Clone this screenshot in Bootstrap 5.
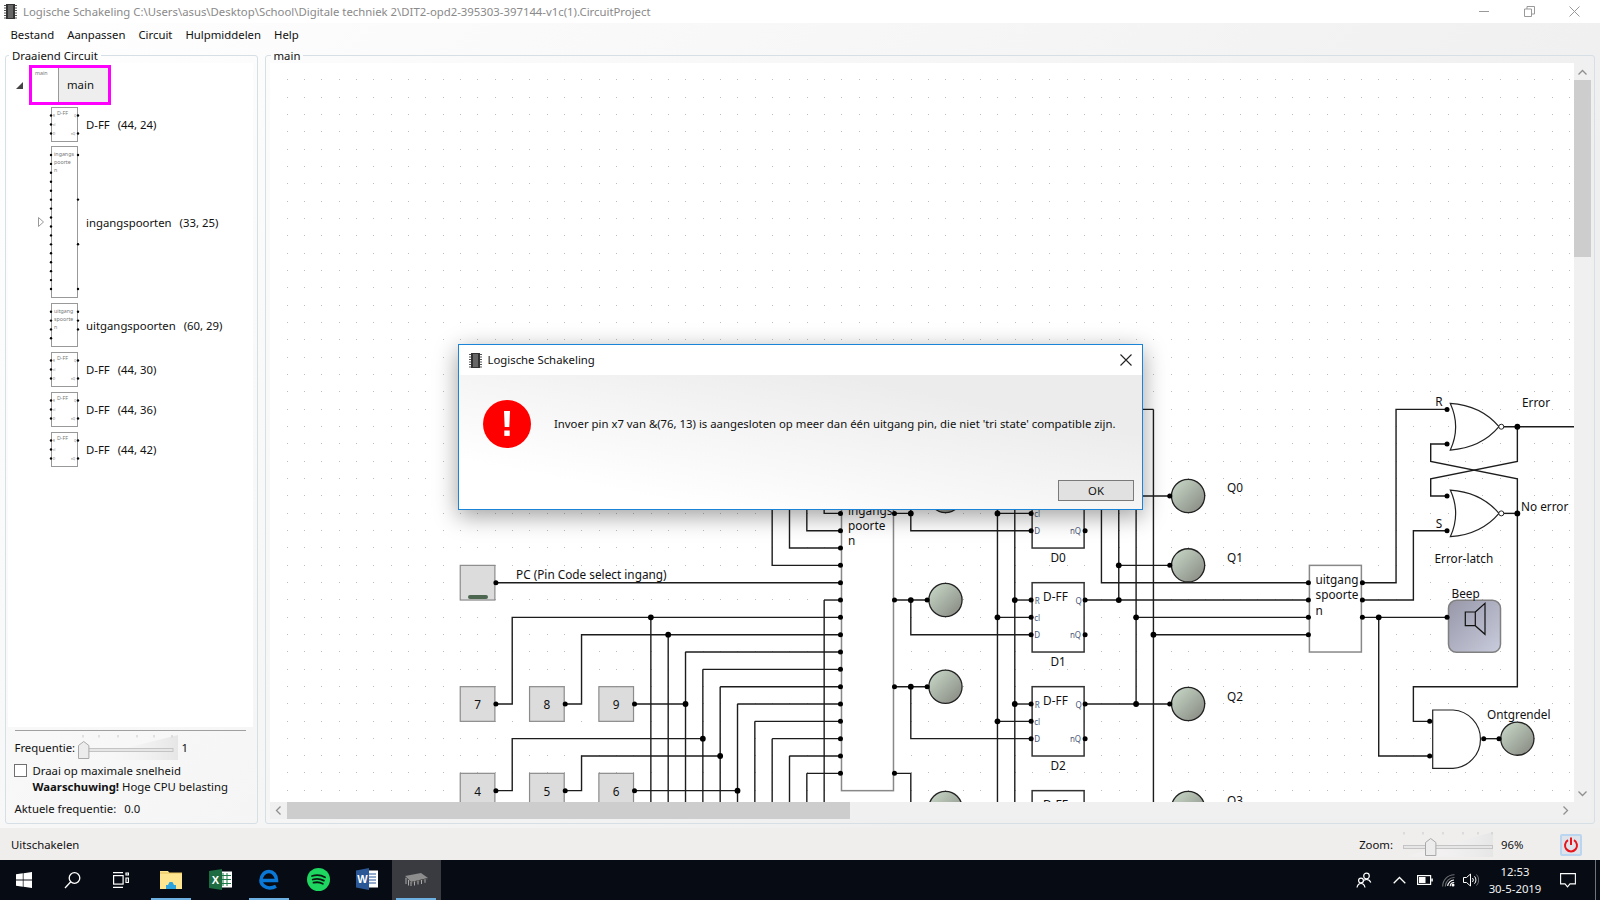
<!DOCTYPE html>
<html lang="nl">
<head>
    <meta charset="UTF-8">
    <title>Logische Schakeling</title>
    <link href="https://cdn.jsdelivr.net/npm/bootstrap@5.3.1/dist/css/bootstrap.min.css" rel="stylesheet">
    <style>
        html, body { height: 900px; overflow: hidden; }
        body {
            font-family: "Noto Sans", "Liberation Sans", sans-serif;
            font-size: 11.35px;
            line-height: 16px;
            color: #111;
            background: #fff;
        }
        .app-window {
            height: 900px;
            position: relative;
            background: linear-gradient(135deg, #fff 0%, #efefef 70%);
        }
        .title-bar { height: 23px; background: #fff; color: #8a8a8a; padding-left: 4px; }
        .title-text { margin-left: 6px; }
        .caption-btn { width: 45px; height: 23px; }
        .caption-end { width: 3.5px; }
        .menu-bar { height: 24px; padding-left: 10.5px; padding-bottom: 1px; gap: 13px; }
        .panel-wrap { height: 777px; margin-bottom: 4px; padding-left: 5px; padding-right: 5px; gap: 6.5px; }
        .group-box {
            border: 1px solid #d5dfe5;
            border-radius: 3px;
            min-width: 0;
            margin: 0;
        }
        .group-box legend {
            float: none;
            width: auto;
            font-size: 11.35px;
            line-height: 16px;
            margin: 0 0 -1px 1px;
            padding: 1px 3px 0 3px;
        }
        .left-box { width: 253px; padding: 0 4px 0 2px; }
        .right-box { padding: 0 3px 4px 4px; }
        .tree-pane { height: 664px; background: #fff; padding-top: 2px; }
        .tree-top { padding-left: 8px; height: 40px; }
        .tree-child { padding-left: 30px; }
        .arrow-open { width: 7px; height: 7px; margin-right: 6px; }
        .arrow-slot { width: 13px; flex: none; }
        .main-node { width: 81.5px; height: 40px; border: 3px solid #f0f; background: #eee; }
        .main-thumb { width: 27px; height: 100%; background: #fff; border-right: 1px solid #999; font-size: 5.3px; line-height: 10px; color: #777; padding-left: 3px; }
        .main-name { margin-left: 8px; }
        .thumb-svg { width: 27px; flex: none; display: block; overflow: visible; }
        .node-name { margin-left: 8px; padding-top: 1.5px; }
        .node-pos { margin-left: 8px; padding-top: 1.5px; }
        .side-rule { height: 1px; background: #a0a0a0; margin: 3px 7px 0 7px; }
        .speed-row { margin: 4px 0 2.5px 6.5px; height: 25px; }
        .slider-freq { width: 100px; height: 25px; margin-left: 2.5px; display: block; }
        .freq-val { margin-left: 4px; }
        .check-row { padding-left: 5.5px; }
        .check-box { width: 13.5px; height: 13.5px; border: 1px solid #707070; background: #fff; margin-top: 1px; flex: none; }
        .check-text { margin-left: 5.5px; }
        .freq-now { margin: 6.5px 0 0 6.5px; }
        .freq-num { margin-left: 8px; }
        .canvas-area { height: 739px; background: #fff; overflow: hidden; }
        .canvas-area svg { display: block; }
        .scroll-v { width: 17px; background: #f0f0f0; }
        .scroll-btn-v { height: 17px; }
        .thumb-v { height: 177px; background: #cdcdcd; }
        .scroll-h { height: 17px; background: #f0f0f0; }
        .scroll-btn-h { width: 17px; height: 17px; }
        .thumb-h { width: 563px; background: #cdcdcd; }
        .status-bar { height: 32px; background: #f0eded; padding: 1px 18px 0 11px; }
        .slider-zoom { width: 90px; height: 25px; margin: 0 8px 0 10px; display: block; }
        .zoom-pct { width: 59px; }
        .power-btn { width: 22px; height: 22px; background: #dfe3ea; border: 2px solid #b9d5ef; border-radius: 2px; }
        .task-bar { height: 40px; background: #070b13; color: #fff; }
        .task-sys { width: 48px; height: 40px; }
        .task-first { margin-left: 2.5px; }
        .task-app { width: 49px; height: 40px; }
        .task-active { background: #393b40; }
        .task-icon { flex: 1 1 auto; }
        .task-line { width: 40px; height: 2px; background: #6cb1e1; }
        .task-line-off { width: 40px; height: 2px; }
        .t45 { width: 45px; } .t27 { width: 27px; } .t23 { width: 23px; } .t25 { width: 25px; } .t20 { width: 20px; } .t68 { width: 68px; } .t38 { width: 38px; }
        .tray-cell { height: 40px; }
        .clock-box { text-align: center; line-height: 17.5px; color: #f2f2f2; }
        .tray-end { width: 9px; height: 40px; border-right: 1px solid #6f7379; margin-right: 4px; }
        .error-dialog {
            position: absolute;
            left: 458px;
            top: 344px;
            width: 685px;
            height: 166px;
            border: 1px solid #1a84d8;
            background: #fff;
            box-shadow: 0 6px 22px rgba(0, 0, 0, .38);
        }
        .dlg-head { height: 30px; padding-left: 9.5px; }
        .dlg-title { margin-left: 6px; }
        .dlg-close { width: 32px; height: 30px; }
        .dlg-main { height: 134px; background: linear-gradient(to top right, #fff 18%, #ececec 78%); }
        .dlg-msg { height: 97px; padding-left: 24px; }
        .dlg-text { margin-left: 23px; white-space: nowrap; }
        .dlg-foot { padding-right: 8px; padding-top: 7.5px; }
        .ok-btn { width: 76px; height: 21px; border: 1px solid #7a7a7a; background: #e1e1e1; border-radius: 0; padding: 0; font-size: 11.35px; line-height: 19px; color: #111; }
        .wire { fill: none; stroke: #1c1c1c; stroke-width: 1.4; }
        .sch-text { font-size: 11.8px; fill: #111; dominant-baseline: central; }
        .pin-text { font-size: 8px; fill: #4a5878; dominant-baseline: central; }
    </style>
</head>
<body>
<div class="app-window d-flex flex-column">
    <!-- title bar -->
    <div class="title-bar d-flex align-items-center">
        <svg width="13" height="15" viewBox="0 0 13 15"><rect x="2" y="0" width="9" height="15" fill="#333"/><rect x="4" y="1" width="5" height="13" fill="#666"/><path d="M0 1.5h2M0 4h2M0 6.5h2M0 9h2M0 11.5h2M0 14h2M11 1.5h2M11 4h2M11 6.5h2M11 9h2M11 11.5h2M11 14h2" stroke="#555" stroke-width="1.2"/></svg>
        <span class="title-text">Logische Schakeling C:\Users\asus\Desktop\School\Digitale techniek 2\DIT2-opd2-395303-397144-v1c(1).CircuitProject</span>
        <div class="ms-auto d-flex">
            <div class="caption-btn d-flex align-items-center justify-content-center"><svg width="11" height="11"><path d="M0 5.5h10" stroke="#999"/></svg></div>
            <div class="caption-btn d-flex align-items-center justify-content-center"><svg width="11" height="11"><path d="M0.5 3h7v7.5h-7zM3 3V0.5h7.5V8H8" fill="none" stroke="#999"/></svg></div>
            <div class="caption-btn d-flex align-items-center justify-content-center"><svg width="11" height="11"><path d="M.5 .5l10 10M10.5 .5l-10 10" stroke="#999"/></svg></div>
            <div class="caption-end"></div>
        </div>
    </div>

    <!-- menu -->
    <div class="menu-bar d-flex align-items-center">
        <span>Bestand</span><span>Aanpassen</span><span>Circuit</span><span>Hulpmiddelen</span><span>Help</span>
    </div>

    <!-- panels -->
    <div class="panel-wrap d-flex">
        <fieldset class="group-box left-box d-flex flex-column flex-shrink-0">
            <legend>Draaiend Circuit</legend>
            <div class="tree-pane" id="tree">
                <div class="tree-top d-flex align-items-center">
                    <svg class="arrow-open" viewBox="0 0 7 7"><path d="M7 0v7H0z" fill="#444"/></svg>
                    <div class="main-node d-flex align-items-center">
                        <div class="main-thumb">main</div>
                        <span class="main-name">main</span>
                    </div>
                </div>
            </div>
            <div class="side-rule"></div>
            <div class="speed-row d-flex align-items-center">
                <span>Frequentie:</span>
                <svg class="slider-freq" id="freqSlider" viewBox="0 0 100 25"></svg>
                <span class="freq-val">1</span>
            </div>
            <div class="check-row d-flex">
                <div class="check-box"></div>
                <div class="check-text">Draai op maximale snelheid<br><b>Waarschuwing!</b> Hoge CPU belasting</div>
            </div>
            <div class="freq-now">Aktuele frequentie:<span class="freq-num">0.0</span></div>
        </fieldset>

        <fieldset class="group-box right-box flex-grow-1 d-flex flex-column">
            <legend>main</legend>
            <div class="d-flex">
                <div class="canvas-area flex-grow-1"><svg id="schematic" width="1305" height="739" viewBox="269 63 1305 739"></svg></div>
                <div class="scroll-v d-flex flex-column">
                    <div class="scroll-btn-v d-flex align-items-center justify-content-center"><svg width="9" height="6"><path d="M.5 5.5l4-4 4 4" fill="none" stroke="#8f8f8f" stroke-width="1.3"/></svg></div>
                    <div class="thumb-v"></div>
                    <div class="flex-grow-1"></div>
                    <div class="scroll-btn-v d-flex align-items-center justify-content-center"><svg width="9" height="6"><path d="M.5 .5l4 4 4-4" fill="none" stroke="#8f8f8f" stroke-width="1.3"/></svg></div>
                </div>
            </div>
            <div class="scroll-h d-flex">
                <div class="scroll-btn-h d-flex align-items-center justify-content-center"><svg width="6" height="9"><path d="M5.5 .5l-4 4 4 4" fill="none" stroke="#8f8f8f" stroke-width="1.3"/></svg></div>
                <div class="thumb-h"></div>
                <div class="flex-grow-1"></div>
                <div class="scroll-btn-h d-flex align-items-center justify-content-center"><svg width="6" height="9"><path d="M.5 .5l4 4-4 4" fill="none" stroke="#8f8f8f" stroke-width="1.3"/></svg></div>
                <div class="scroll-btn-h"></div>
            </div>
        </fieldset>
    </div>

    <!-- status bar -->
    <div class="status-bar d-flex align-items-center">
        <span>Uitschakelen</span>
        <div class="ms-auto d-flex align-items-center">
            <span>Zoom:</span>
            <svg class="slider-zoom" id="zoomSlider" viewBox="0 0 90 25"></svg>
            <span class="zoom-pct">96%</span>
            <div class="power-btn d-flex align-items-center justify-content-center">
                <svg width="16" height="16" viewBox="0 0 16 16"><path d="M5 3.2A6 6 0 1 0 11 3.2M8 .5V8" fill="none" stroke="#e8141c" stroke-width="2"/></svg>
            </div>
        </div>
    </div>

    <!-- windows taskbar -->
    <div class="task-bar d-flex">
        <div class="task-sys d-flex align-items-center justify-content-center">
            <svg width="16" height="16" viewBox="0 0 16 16" fill="#fff"><path d="M0 2.3l6.8-1v6.3H0zM7.5 1.2L16 0v7.6H7.5zM0 8.4h6.8v6.3l-6.8-1zM7.5 8.4H16V16l-8.5-1.2z"/></svg>
        </div>
        <div class="task-sys d-flex align-items-center justify-content-center">
            <svg width="17" height="17" viewBox="0 0 17 17" fill="none" stroke="#fff" stroke-width="1.3"><circle cx="10.5" cy="6" r="5.3"/><path d="M6.8 9.8L1 16"/></svg>
        </div>
        <div class="task-sys d-flex align-items-center justify-content-center">
            <svg width="17" height="16" viewBox="0 0 17 16" fill="none" stroke="#fff" stroke-width="1.2"><path d="M1 .6h10M1 15.4h10"/><rect x="1.6" y="3.6" width="9.5" height="8.5"/><path d="M14 1h2.4v2H14zM14 6h2.4v4.5H14z"/></svg>
        </div>
        <div class="task-app task-first d-flex flex-column align-items-center">
            <div class="task-icon d-flex align-items-center">
                <svg width="22" height="19" viewBox="0 0 22 19"><path d="M0 1h8l1.5 2H22v16H0z" fill="#fde68f"/><path d="M0 3h22" stroke="#e6c25f"/><path d="M6 19v-4h2l1.5-3h3l1.5 3h2v4z" fill="#2ea4df"/></svg>
            </div>
            <div class="task-line"></div>
        </div>
        <div class="task-app d-flex flex-column align-items-center">
            <div class="task-icon d-flex align-items-center">
                <svg width="23" height="21" viewBox="0 0 23 21"><rect x="10" y="2.5" width="13" height="16" fill="#fff"/><path d="M14 4v13M18 4v13M11 6.5h11M11 10.5h11M11 14.5h11" stroke="#1f7a49"/><path d="M0 2l13-2v21L0 19z" fill="#1d6b40"/><text x="6.3" y="14.5" font-family="Liberation Sans" font-size="11" font-weight="700" fill="#fff" text-anchor="middle">X</text></svg>
            </div>
            <div class="task-line-off"></div>
        </div>
        <div class="task-app d-flex flex-column align-items-center">
            <div class="task-icon d-flex align-items-center">
                <svg width="20" height="21" viewBox="0 0 20 21"><path d="M3.5 11.5H17.5C17.5 6 14 2.5 10 2.5C5.5 2.5 2 6.5 2 11.5C2 16 6.5 19 10.5 19C13 19 15 18.5 17 17.3" fill="none" stroke="#0a78d7" stroke-width="3.6"/></svg>
            </div>
            <div class="task-line"></div>
        </div>
        <div class="task-app d-flex flex-column align-items-center">
            <div class="task-icon d-flex align-items-center">
                <svg width="23" height="23" viewBox="0 0 23 23"><circle cx="11.5" cy="11.5" r="11.5" fill="#1ed760"/><path d="M5 8c4.5-1.3 9-1 13 1.2M5.7 11.5c4-1 7.7-.7 11.2 1.1M6.5 14.7c3.3-.8 6.5-.5 9.3 1" fill="none" stroke="#0b1a10" stroke-width="1.8" stroke-linecap="round"/></svg>
            </div>
            <div class="task-line-off"></div>
        </div>
        <div class="task-app d-flex flex-column align-items-center">
            <div class="task-icon d-flex align-items-center">
                <svg width="22" height="22" viewBox="0 0 22 22"><rect x="10" y="2.5" width="12" height="17" fill="#fff"/><path d="M13 6h7M13 9h7M13 12h7M13 15h7" stroke="#2b5797"/><path d="M0 2.5l13-2.5v22L0 19.5z" fill="#2b5797"/><text x="6.5" y="15" font-family="Liberation Sans" font-size="11" font-weight="700" fill="#fff" text-anchor="middle">W</text></svg>
            </div>
            <div class="task-line-off"></div>
        </div>
        <div class="task-app task-active d-flex flex-column align-items-center">
            <div class="task-icon d-flex align-items-center">
                <svg width="24" height="13" viewBox="0 0 24 13"><path d="M1 3L17 0l7 5-17 4z" fill="#8d8d8d"/><path d="M1 3l6 6 17-4v1.5L7 11 1 5z" fill="#4a4a4a"/><path d="M2 5v6M4.5 7v5.5M7 9v4M10.5 8.5v4M14 7.5v4M17.5 7v4M21 6.3v3.5" stroke="#aaa"/></svg>
            </div>
            <div class="task-line"></div>
        </div>
        <div class="ms-auto d-flex">
            <div class="tray-cell t45 d-flex align-items-center justify-content-center">
                <svg width="16" height="16" viewBox="0 0 16 16" fill="none" stroke="#fff" stroke-width="1.2"><circle cx="10.5" cy="4" r="2.8"/><path d="M6.3 10.5c.6-2 2-3 4.2-3s3.6 1 4.3 3"/><circle cx="5" cy="8.5" r="2.4" fill="#070b13"/><path d="M1 15.5c.5-2.5 1.8-4 4-4s3.5 1.5 4 4" fill="#070b13"/></svg>
            </div>
            <div class="tray-cell t27 d-flex align-items-center justify-content-center">
                <svg width="13" height="8" viewBox="0 0 13 8"><path d="M.7 7.3L6.5 1.5l5.8 5.8" fill="none" stroke="#fff" stroke-width="1.3"/></svg>
            </div>
            <div class="tray-cell t23 d-flex align-items-center justify-content-center">
                <svg width="16" height="10" viewBox="0 0 16 10"><rect x=".6" y=".6" width="13" height="8.8" fill="none" stroke="#fff" stroke-width="1.2"/><rect x="2" y="2" width="6.5" height="6" fill="#fff"/><rect x="14.3" y="3.5" width="1.5" height="3" fill="#fff"/></svg>
            </div>
            <div class="tray-cell t25 d-flex align-items-center justify-content-center">
                <svg width="13" height="13" viewBox="0 0 13 13" fill="none"><path d="M.7 12.5A11.5 11.5 0 0 1 12.5 .7M3.3 12.5A9 9 0 0 1 12.5 3.5" stroke="#6d6f73" stroke-width="1.1"/><path d="M5.7 12A6.5 6.5 0 0 1 12 6M8.2 12.3A4 4 0 0 1 12.2 8.5" stroke="#fff" stroke-width="1.1"/><circle cx="11" cy="11" r="1.5" fill="#fff"/></svg>
            </div>
            <div class="tray-cell t20 d-flex align-items-center justify-content-center">
                <svg width="16" height="14" viewBox="0 0 16 14" fill="none" stroke="#fff" stroke-width="1"><path d="M.5 4.5h3L7.5 1v12l-4-3.5h-3z"/><path d="M9.5 5a3 3 0 0 1 0 4M11.5 3.3a5.5 5.5 0 0 1 0 7.4"/><path d="M13.5 1.5a8 8 0 0 1 0 11" stroke="#6d6f73"/></svg>
            </div>
            <div class="tray-cell t68 clock-box d-flex flex-column justify-content-center"><span>12:53</span><span>30-5-2019</span></div>
            <div class="tray-cell t38 d-flex align-items-center justify-content-center">
                <svg width="16" height="15" viewBox="0 0 16 15"><path d="M.6 .6h14.8v10.3H10l-2.5 3-2.5-3H.6z" fill="none" stroke="#fff" stroke-width="1.1"/></svg>
            </div>
            <div class="tray-end"></div>
        </div>
    </div>

    <!-- error dialog -->
    <div class="error-dialog d-flex flex-column">
        <div class="dlg-head d-flex align-items-center">
            <svg width="13" height="15" viewBox="0 0 13 15"><rect x="2" y="0" width="9" height="15" fill="#333"/><rect x="4" y="1" width="5" height="13" fill="#666"/><path d="M0 1.5h2M0 4h2M0 6.5h2M0 9h2M0 11.5h2M0 14h2M11 1.5h2M11 4h2M11 6.5h2M11 9h2M11 11.5h2M11 14h2" stroke="#555" stroke-width="1.2"/></svg>
            <span class="dlg-title">Logische Schakeling</span>
            <div class="dlg-close ms-auto d-flex align-items-center justify-content-center">
                <svg width="12" height="12"><path d="M.5 .5l11 11M11.5 .5l-11 11" stroke="#222" stroke-width="1.1"/></svg>
            </div>
        </div>
        <div class="dlg-main">
            <div class="dlg-msg d-flex align-items-center">
                <svg width="48" height="48" viewBox="0 0 48 48" class="flex-shrink-0"><circle cx="24" cy="24" r="24" fill="#f00"/><path d="M21 11h6l-.7 16h-4.600z" fill="#fff"/><rect x="21.3" y="30.5" width="5.4" height="5.4" fill="#fff"/></svg>
                <span class="dlg-text">Invoer pin x7 van &amp;(76, 13) is aangesloten op meer dan één uitgang pin, die niet 'tri state' compatible zijn.</span>
            </div>
            <div class="dlg-foot d-flex justify-content-end">
                <button type="button" class="btn ok-btn">OK</button>
            </div>
        </div>
    </div>
</div>

<script src="https://cdn.jsdelivr.net/npm/bootstrap@5.3.1/dist/js/bootstrap.bundle.min.js"></script>
<script>
    // grid of the schematic, one cell is 17.33px at 96% zoom
    const X = c => 268.6 + 17.33 * c;
    const Y = r => 62.8 + 17.33 * r;
    const W = (c1, c2) => X(c2) - X(c1);
    let s = '';

    s += '<defs><linearGradient id="lampFill" x1="0" y1="0" x2="1" y2="1"><stop offset="0" stop-color="#cbdccb"/><stop offset="1" stop-color="#84857e"/></linearGradient>' +
         '<linearGradient id="spkFill" x1="0" y1="0" x2="1" y2="1"><stop offset="0" stop-color="#9797a8"/><stop offset="1" stop-color="#c9ccdc"/></linearGradient></defs>';

    // background dots
    let dots = '';
    for (let i = 0; i < 76; i++) {
        for (let j = 0; j < 43; j++) {
            dots += 'M' + Math.round(285.7 + 17.33 * i) + ' ' + Math.round(79.3 + 17.33 * j) + 'h1v1h-1z';
        }
    }
    s += '<path d="' + dots + '" fill="#bdbdbd"/>';

    // wires as lists of [col, row]
    const wires = [
        [[13,30],[33,30]],
        [[13,37],[14,37],[14,32],[33,32]],
        [[17,37],[18,37],[18,33],[33,33]],
        [[21,37],[24,37]],
        [[13,42],[14,42],[14,39],[25,39]],
        [[17,42],[18,42],[18,40],[26,40]],
        [[21,42],[27,42]],
        [[22,32],[22,44]], [[23,33],[23,44]],
        [[24,34],[33,34]], [[24,34],[24,44]],
        [[25,35],[33,35]], [[25,35],[25,44]],
        [[26,36],[33,36]], [[26,36],[26,44]],
        [[27,37],[33,37]], [[27,37],[27,44]],
        [[28,38],[33,38]], [[28,38],[28,44]],
        [[29,39],[33,39]], [[29,39],[29,44]],
        [[30,40],[33,40]], [[30,40],[30,44]],
        [[31,41],[33,41]], [[31,41],[31,44]],
        [[32,31],[33,31]], [[32,31],[32,44]],
        [[29,22],[29,29],[33,29]],
        [[30,22],[30,28],[33,28]],
        [[31,22],[31,27],[33,27]],
        [[32,22],[32,26],[33,26]],
        [[36,26],[37,26],[37,27],[44,27]],
        [[37,26],[37,25],[38,25]],
        [[36,31],[38,31]], [[37,31],[37,33],[44,33]],
        [[36,36],[38,36]], [[37,36],[37,39],[44,39]],
        [[36,41],[37,41],[37,43],[38,43]],
        [[42,22],[42,44]], [[42,26],[44,26]], [[42,32],[44,32]], [[42,38],[44,38]],
        [[43,22],[43,44]], [[43,31],[44,31]], [[43,37],[44,37]],
        [[48,22],[48,30],[60,30]],
        [[49,22],[49,31]], [[49,29],[52,29]], [[47,31],[60,31]],
        [[50,22],[50,37]], [[50,32],[60,32]], [[47,37],[52,37]],
        [[51,20],[51,44]], [[51,33],[60,33]], [[47,20],[51,20]],
        [[47,25],[52,25]],
        [[63,30],[65,30],[65,20],[68,20]],
        [[63,31],[66,31],[66,27],[68,27]],
        [[63,32],[68,32]],
        [[64,32],[64,40],[67,40]],
        [[71,21],[76,21]], [[72,21],[72,23],[67,24],[67,25],[68,25]],
        [[68,22],[67,22],[67,23],[72,24],[72,36],[66,36],[66,38],[67,38]],
        [[71,26],[72,26]],
        [[70,39],[71,39]]
    ];
    wires.forEach(w => {
        s += '<polyline class="wire" points="' + w.map(p => X(p[0]) + ',' + Y(p[1])).join(' ') + '"/>';
    });

    // logic blocks
    function block(c1, r1, c2, r2, stroke) {
        s += '<rect x="' + X(c1) + '" y="' + Y(r1) + '" width="' + W(c1, c2) + '" height="' + (Y(r2) - Y(r1)) + '" fill="#fff" stroke="' + stroke + '" stroke-width="1.5"/>';
    }
    function label(x, y, txt, cls, anchor) {
        s += '<text x="' + x + '" y="' + y + '" class="' + (cls || 'sch-text') + '"' + (anchor ? ' text-anchor="' + anchor + '"' : '') + '>' + txt + '</text>';
    }
    block(33, 25, 36, 42, '#888');
    block(60, 29, 63, 34, '#888');
    label(847, 509.5, 'ingangs'); label(847, 524.5, 'poorte'); label(847, 539.5, 'n');
    label(1314.5, 579, 'uitgang'); label(1314.5, 594, 'spoorte'); label(1314.5, 610, 'n');

    [[24, 'D0'], [30, 'D1'], [36, 'D2'], [42, '']].forEach(d => {
        const r = d[0];
        block(44, r, 47, r + 4, '#333');
        label(X(44) + 11, Y(r) + 13.5, 'D-FF');
        if (!d[1]) return; // the last flip-flop runs off the canvas
        label(X(44) + 5, Y(r + 1), 'R', 'pin-text', 'middle');
        label(X(44) + 5, Y(r + 2), 'cl', 'pin-text', 'middle');
        label(X(44) + 5, Y(r + 3), 'D', 'pin-text', 'middle');
        label(X(47) - 5.4, Y(r + 1), 'Q', 'pin-text', 'middle');
        label(X(47) - 3, Y(r + 3), 'nQ', 'pin-text', 'end');
        label(X(45.5), Y(r + 4) + 8.5, d[1], 'sch-text', 'middle');
    });

    // number keys and the PC switch
    [[11, 36, '7'], [15, 36, '8'], [19, 36, '9'], [11, 41, '4'], [15, 41, '5'], [19, 41, '6'], [11, 29, '']].forEach(k => {
        s += '<rect x="' + X(k[0]) + '" y="' + Y(k[1]) + '" width="' + W(k[0], k[0] + 2) + '" height="' + (Y(k[1] + 2) - Y(k[1])) + '" fill="#dcdcdc" stroke="#8b8b8b" stroke-width="1.2"/>';
        if (k[2]) label(X(k[0] + 1), Y(k[1] + 1), k[2], 'sch-text', 'middle');
    });
    s += '<rect x="467" y="595" width="20" height="4" rx="2" fill="#4d6650"/>';
    label(515, 574, 'PC (Pin Code select ingang)');

    // lamps
    [[39, 25], [39, 31], [39, 36], [39, 43], [53, 25], [53, 29], [53, 37], [53, 43], [72, 39]].forEach(l => {
        s += '<circle cx="' + X(l[0]) + '" cy="' + Y(l[1]) + '" r="16.6" fill="url(#lampFill)" stroke="#222" stroke-width="1.3"/>';
    });
    label(1226, 487, 'Q0'); label(1226, 557, 'Q1'); label(1226, 696, 'Q2'); label(1226, 800, 'Q3');

    // gates, NOR twice and an AND
    function norGate(cy) {
        const t = cy - 23.3, b = cy + 23.3, l = 1449.3;
        s += '<path d="M' + l + ' ' + t + 'Q1480 ' + (t + 2) + ' 1498 ' + cy + 'Q1480 ' + (b - 2) + ' ' + l + ' ' + b + 'Q1460 ' + cy + ' ' + l + ' ' + t + 'Z" fill="#fff" stroke="#222" stroke-width="1.2"/>';
        s += '<circle cx="1500.3" cy="' + cy + '" r="2.5" fill="#fff" stroke="#222"/>';
    }
    norGate(Y(21));
    norGate(Y(26));
    s += '<path d="M1431.7 710H1452A29.2 29.2 0 0 1 1452 768.3H1431.7Z" fill="#fff" stroke="#222" stroke-width="1.2"/>';

    // speaker
    s += '<rect x="1447.5" y="600.3" width="52" height="52" rx="8" fill="url(#spkFill)" stroke="#808080" stroke-width="1.5"/>';
    s += '<path d="M1464.3 612h10v13.7h-10zM1474.3 612l9.7-8.7v31l-9.7-8.6" fill="none" stroke="#111" stroke-width="1.2"/>';

    label(1438, 400.5, 'R', 'sch-text', 'middle'); label(1521, 401.5, 'Error');
    label(1438, 522.5, 'S', 'sch-text', 'middle'); label(1520, 505.5, 'No error');
    label(1433.5, 557.5, 'Error-latch'); label(1450.5, 592.5, 'Beep'); label(1486, 714, 'Ontgrendel');

    // connection points: pins sit half outside their block, junctions on the wire
    function dot(c, r, dx, rad) {
        s += '<circle cx="' + (X(c) + dx) + '" cy="' + Y(r) + '" r="' + rad + '" fill="#000"/>';
    }
    const leftPins = [[38,31],[38,36],[38,25],[52,25],[52,29],[52,37],[68,20],[68,22],[68,25],[68,27],[68,32],[67,38],[67,40],[71,39]];
    const rightPins = [[13,30],[13,37],[17,37],[21,37],[13,42],[17,42],[21,42],[36,26],[36,31],[36,36],[36,41],[63,30],[63,31],[63,32],[70,39]];
    const junctions = [[22,32],[23,33],[24,37],[25,39],[26,40],[27,42],[37,26],[37,31],[37,36],[42,26],[42,32],[42,38],[43,31],[43,37],[49,29],[49,31],[50,32],[50,37],[51,33],[64,32],[72,21],[72,26]];
    for (let r = 26; r <= 41; r++) leftPins.push([33, r]);
    for (let r = 30; r <= 33; r++) leftPins.push([60, r]);
    [24, 30, 36].forEach(r => {
        leftPins.push([44, r + 1], [44, r + 2], [44, r + 3]);
        rightPins.push([47, r + 1], [47, r + 3]);
    });
    leftPins.forEach(p => dot(p[0], p[1], -1, 2.5));
    rightPins.forEach(p => dot(p[0], p[1], 1, 2.5));
    junctions.forEach(p => dot(p[0], p[1], 0, 2.9));
    document.getElementById('schematic').innerHTML = s;

    // thumbnails in the circuit tree
    function thumb(h, lines, left, right) {
        let t = '<rect x=".5" y=".5" width="26" height="' + (h - 1) + '" fill="#fff" stroke="#999"/>';
        lines.forEach((l, i) => {
            t += '<text x="' + l[1] + '" y="' + (l[2] !== undefined ? l[2] : 9.5 + i * 8) + '" font-size="' + (l[3] || 5.3) + '" fill="#777">' + l[0] + '</text>';
        });
        left.forEach(y => { t += '<circle cx="0" cy="' + y + '" r="1.2" fill="#000"/>'; });
        right.forEach(y => { t += '<circle cx="27" cy="' + y + '" r="1.2" fill="#000"/>'; });
        return '<svg class="thumb-svg" height="' + h + '" viewBox="0 0 27 ' + h + '">' + t + '</svg>';
    }
    const ffThumb = thumb(35, [['D-FF', 6, 8], ['R', 2, 9.5, 3], ['cl', 2, 19, 3], ['D', 2, 27.5, 3], ['Q', 23, 9.5, 3], ['nQ', 20, 27.5, 3]], [8.5, 17.5, 26.5], [8.5, 26.5]);
    const ingLeft = [];
    for (let i = 1; i <= 16; i++) ingLeft.push(i * 8.94);
    const rows = [
        ['D-FF', '(44, 24)', ffThumb, 2, false],
        ['ingangspoorten', '(33, 25)', thumb(152, [['ingangs', 3], ['poorte', 3], ['n', 3]], ingLeft, [8.94, 53.6, 98.3, 143]), 4, true],
        ['uitgangspoorten', '(60, 29)', thumb(44, [['uitgang', 3], ['spoorte', 3], ['n', 3]], [8.8, 17.6, 26.4, 35.2], [8.8, 17.6, 26.4]), 5, false],
        ['D-FF', '(44, 30)', ffThumb, 5, false],
        ['D-FF', '(44, 36)', ffThumb, 5, false],
        ['D-FF', '(44, 42)', ffThumb, 5, false]
    ];
    let tree = '';
    rows.forEach(r => {
        tree += '<div class="tree-child d-flex align-items-center" style="margin-top:' + r[3] + 'px">' +
            '<div class="arrow-slot">' + (r[4] ? '<svg width="6" height="10" viewBox="0 0 6 10" class="d-block"><path d="M.5 .5l5 4.5-5 4.5z" fill="#fff" stroke="#999"/></svg>' : '') + '</div>' +
            r[2] + '<span class="node-name">' + r[0] + '</span><span class="node-pos">' + r[1] + '</span></div>';
    });
    document.getElementById('tree').insertAdjacentHTML('beforeend', tree);

    // the two sliders
    function slider(id, w, track, thumbX, ticks) {
        let t = '<defs><linearGradient id="' + id + 'W"><stop offset="0" stop-color="#fff" stop-opacity="0"/><stop offset="1" stop-color="#e6e6e6"/></linearGradient></defs>';
        t += '<path d="M0 25L' + w + ' 0V25z" fill="url(#' + id + 'W)"/>';
        ticks.forEach(x => { t += '<path d="M' + x + ' 0v2.5" stroke="#c8c8c8"/>'; });
        t += '<rect x="' + track + '" y="13.5" width="' + (w - 2 * track) + '" height="3" fill="#e6e6e6" stroke="#c4c4c4"/>';
        t += '<path d="M' + thumbX + ' 23.5v-13l5.2-4 5.2 4v13z" fill="#ececec" stroke="#a9a9a9"/>';
        document.getElementById(id).innerHTML = t;
    }
    slider('freqSlider', 100, 5, 0.5, [5, 21, 40, 59, 76, 94]);
    slider('zoomSlider', 90, 0.5, 22.5, [1, 20, 40, 60, 75, 89]);
</script>
</body>
</html>
